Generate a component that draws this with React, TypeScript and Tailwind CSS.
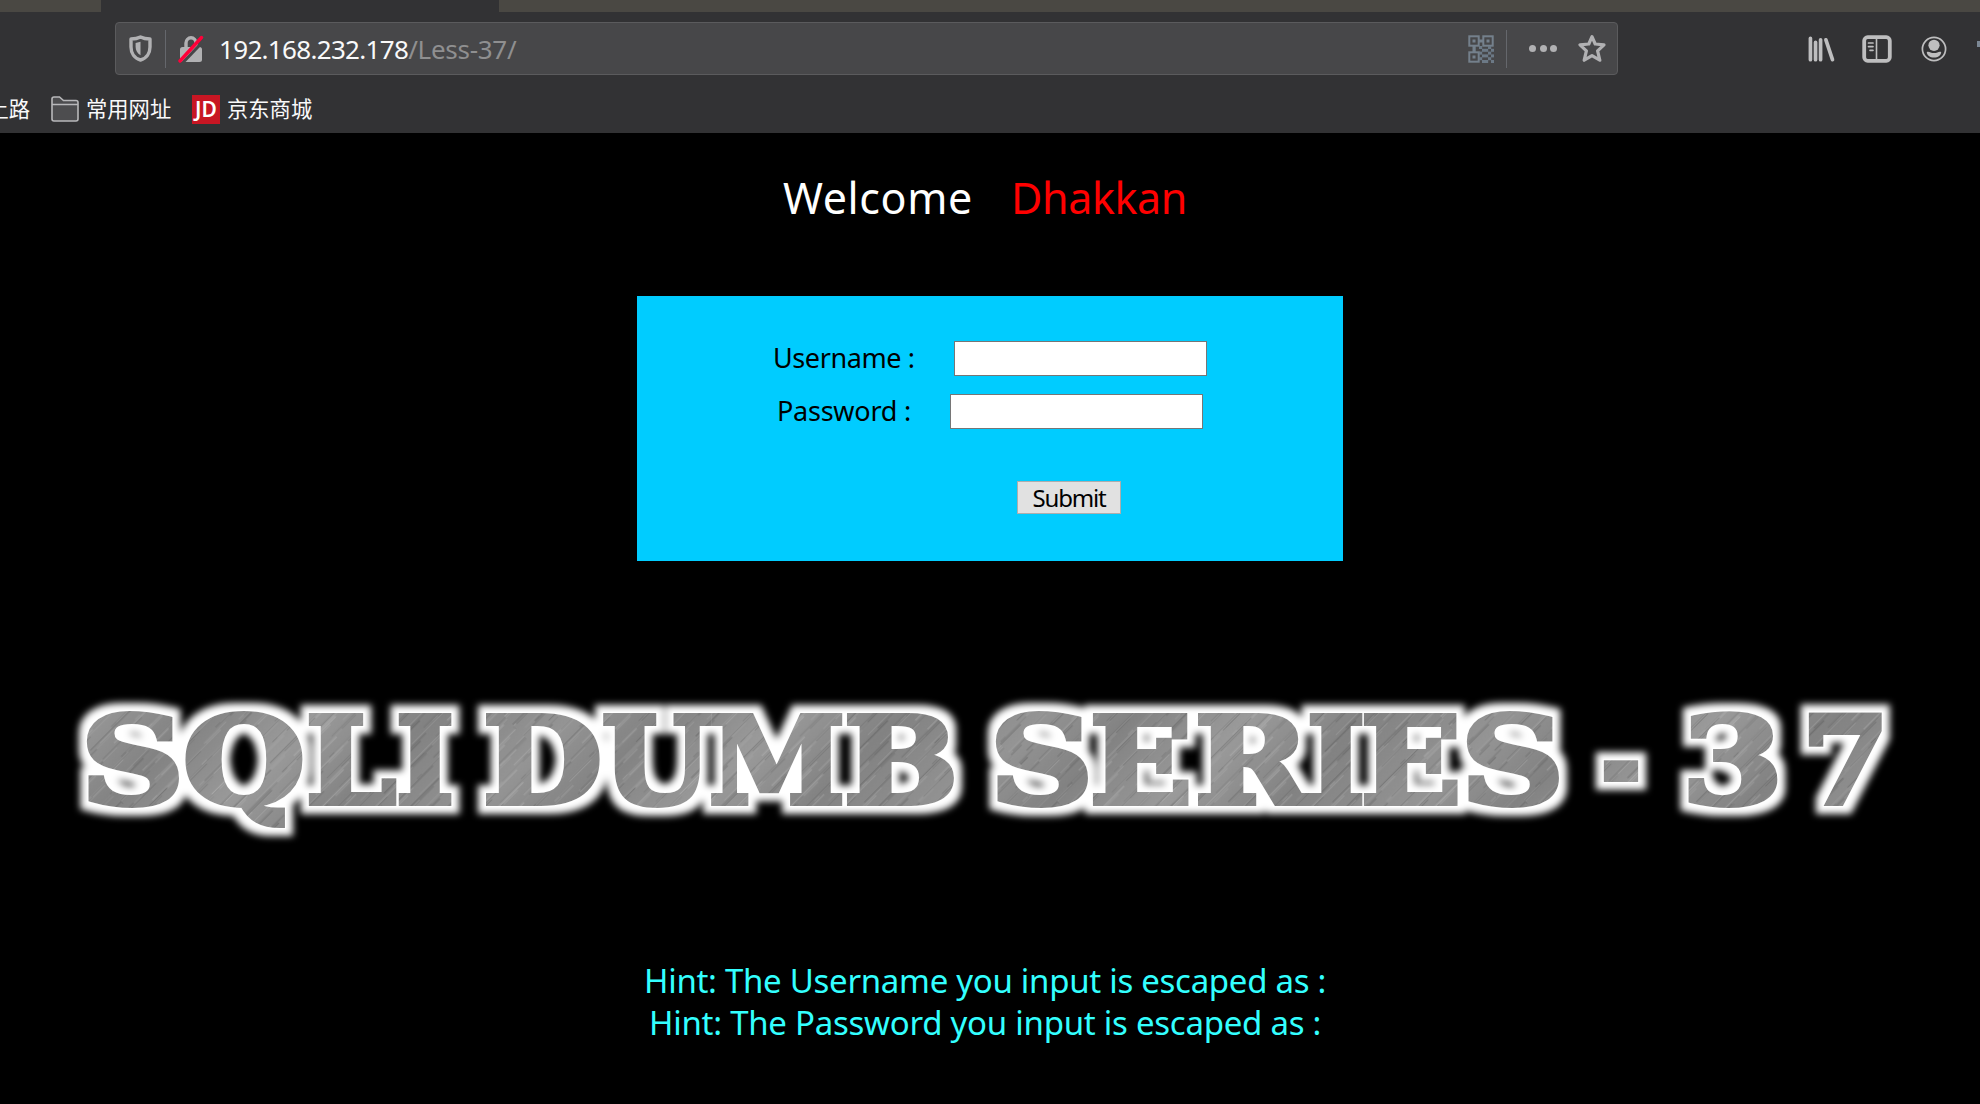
import React from "react";

const SANS = "font-['Noto_Sans','Noto_Sans_CJK_SC',sans-serif]";

function Shield() {
  return (
    <svg width="23" height="27" viewBox="0 0 23 27">
      <path d="M11.500 2 C8 3.800 5 4 2 4 V12 C2 18.500 5.500 23.500 11.500 25 C17.500 23.500 21 18.500 21 12 V4 C18 4 15 3.800 11.500 2Z" fill="none" stroke="#b1b1b3" strokeWidth="3.400" strokeLinejoin="round" />
      <path d="M11.500 6.800 V20.300 C8.500 18.600 6.600 15.500 6.600 12 V8Z" fill="#b1b1b3" />
    </svg>
  );
}

function BrokenLock() {
  return (
    <svg width="26" height="28" viewBox="0 0 26 28">
      <path d="M8 13 V8 a5 5.200 0 0 1 10 0 V13" fill="none" stroke="#b1b1b3" strokeWidth="3.400" />
      <rect x="2" y="12" width="22" height="15" rx="2.500" fill="#b1b1b3" />
      <path d="M4.500 28 L27 4.500" stroke="#474749" strokeWidth="3" />
      <path d="M2 26 L23.500 2.500" stroke="#ff0039" strokeWidth="3.400" strokeLinecap="round" />
    </svg>
  );
}

const CHECKER = ["010010", "001101", "110010", "001101", "010010", "101101"];

function QrCode() {
  return (
    <svg width="26" height="28" viewBox="0 0 26 28">
      <g fill="none" stroke="#74808c" strokeWidth="2">
        <rect x="1.300" y="1.300" width="9.400" height="9.400" />
        <rect x="15.300" y="1.300" width="9.400" height="9.400" />
        <rect x="1.300" y="17.300" width="9.400" height="9.400" />
      </g>
      <g fill="#74808c">
        <rect x="4.500" y="4.500" width="3" height="3" />
        <rect x="18.500" y="4.500" width="3" height="3" />
        <rect x="4.500" y="20.500" width="3" height="3" />
        <rect x="11" y="4.500" width="4" height="3" />
        <rect x="4.500" y="11" width="3.200" height="6" />
      </g>
      {CHECKER.flatMap((row, y) =>
        row.split("").map((c, x) =>
          c === "1" && !(x === 0 && y > 1) ? (
            <rect key={`${x}-${y}`} x={8 + x * 3} y={11 + y * 2.8} width="3.200" height="3" fill="#6c7986" />
          ) : null,
        ),
      )}
    </svg>
  );
}

function Star() {
  return (
    <svg width="28" height="29" viewBox="0 0 28 29">
      <path d="M14 2.600 L17.200 10 L26 10.800 L19.600 16.800 L21.800 26.200 L14 21.600 L6.200 26.200 L8.400 16.800 L2 10.800 L10.800 10Z" fill="none" stroke="#b1b1b3" strokeWidth="3.200" strokeLinejoin="round" />
    </svg>
  );
}

function Library() {
  return (
    <svg width="28" height="28" viewBox="0 0 28 28" stroke="#bebebf" strokeWidth="3.800" strokeLinecap="round">
      <path d="M2.500 3 V25 M7.800 7 V25 M13 4.500 V25 M18.500 4.500 L25.300 25" />
    </svg>
  );
}

function Sidebar() {
  return (
    <svg width="30" height="28" viewBox="0 0 30 28" fill="none" stroke="#bebebf">
      <rect x="2.200" y="2.200" width="25.600" height="23.600" rx="3.500" strokeWidth="3.800" />
      <path d="M14.500 3 V25" strokeWidth="1.600" />
      <path d="M6.500 8 H11 M6.500 11.600 H11 M8 15.300 H11" strokeWidth="1.700" strokeLinecap="round" />
    </svg>
  );
}

function Account() {
  return (
    <svg width="26" height="28" viewBox="0 0 26 28">
      <circle cx="13" cy="14" r="11.600" fill="none" stroke="#bebebf" strokeWidth="1.700" />
      <circle cx="13" cy="10.300" r="5.600" fill="#bebebf" />
      <path d="M5.800 17 C8 15.800 9.500 18 13 18 C16.500 18 18 15.800 20.200 17 C20.200 20.500 17 22.500 13 22.500 C9 22.500 5.800 20.500 5.800 17Z" fill="#bebebf" />
    </svg>
  );
}

function Folder() {
  return (
    <svg width="28" height="26" viewBox="0 0 28 26">
      <path d="M1 3 a2 2 0 0 1 2-2 h5.500 l4 3.500 H25 a2 2 0 0 1 2 2 V23 a2 2 0 0 1-2 2 H3 a2 2 0 0 1-2-2Z M1 8.500 H27" fill="#4d4d4f" stroke="#b8b8ba" strokeWidth="1.600" />
    </svg>
  );
}

function Browser() {
  return (
    <header className="h-[133px] overflow-hidden bg-[#323234]">
      <div className="flex h-[12px] justify-between">
        <div className="w-[101px] bg-[#4a4843]" />
        <div className="w-[1481px] bg-[#4a4843]" />
      </div>
      <div className="flex h-[73px] items-center pl-[115px]">
        <div className="flex h-[53px] w-[1503px] items-center rounded-[4px] border border-[#5b5b5d] bg-[#474749] pl-[13px] pr-[11px]">
          <Shield />
          <div className="ml-[13px] h-[38px] w-px bg-[#65676c]" />
          <div className="ml-[12px]"><BrokenLock /></div>
          <div className="ml-[15px] grow whitespace-pre text-[26px] leading-none tracking-[-0.280px] text-[#8f8f90]">
            <span className="tracking-[-0.680px] text-[#f9f9fa]">192.168.232.178</span>/Less-37/
          </div>
          <QrCode />
          <div className="ml-[12px] h-[38px] w-px bg-[#65676c]" />
          <div className="ml-[22px] flex gap-[3.500px]">
            <i className="size-[7px] rounded-full bg-[#b1b1b3]" />
            <i className="size-[7px] rounded-full bg-[#b1b1b3]" />
            <i className="size-[7px] rounded-full bg-[#b1b1b3]" />
          </div>
          <div className="ml-[21px]"><Star /></div>
        </div>
        <div className="ml-[190px] flex w-[172px] items-center overflow-hidden">
          <Library />
          <div className="ml-[27px]"><Sidebar /></div>
          <div className="ml-[29px]"><Account /></div>
          <div className="mb-[10px] ml-[30px] h-[6px] w-[3px] bg-[#7b8794]" />
        </div>
      </div>
      <div className="flex h-[48px] items-center text-[21.300px] leading-none text-[#f9f9fa]">
        <div className="flex w-[30px] justify-end whitespace-nowrap">上路</div>
        <div className="ml-[21px]"><Folder /></div>
        <span className="ml-[7px] w-[85px] whitespace-nowrap">常用网址</span>
        <div className="ml-[21px] flex h-[29px] w-[28px] items-center justify-center bg-[#c81623] text-[21px] font-semibold text-white">JD</div>
        <span className="ml-[7px] whitespace-nowrap">京东商城</span>
      </div>
    </header>
  );
}

type Glyph = [char: string, x: number, width: number];

const WORDS: Glyph[][] = [
  [["S", 81, 103], ["Q", 183, 122], ["L", 306, 90], ["I", 396, 58]],
  [["D", 483, 119], ["U", 602, 109], ["M", 709, 136], ["B", 844, 114]],
  [["S", 990, 103], ["E", 1090, 102], ["R", 1195, 114], ["I", 1307, 58], ["E", 1361, 100], ["S", 1461, 103]],
  [["-", 1601, 40]],
  [["3", 1682, 101], ["7", 1802, 87]],
];

function Banner() {
  return (
    <svg width="1980" height="170" viewBox="0 0 1980 170" className="block">
      <defs>
        <linearGradient id="steel">
          <stop offset="0" stopColor="#828282" />
          <stop offset="0.3" stopColor="#949494" />
          <stop offset="0.5" stopColor="#828282" />
          <stop offset="0.75" stopColor="#9a9a9a" />
          <stop offset="1" stopColor="#828282" />
        </linearGradient>
        <pattern id="brush" width="331" height="331" patternUnits="userSpaceOnUse" patternTransform="rotate(45)">
          <rect width="331" height="331" fill="url(#steel)" />
          {Array.from({ length: 600 }, (_, i) => (
            <rect
              key={i}
              x={(i * 204.57) % 331}
              y={((i * 83.7) % 371) - 50}
              width={0.7 + (i % 3) * 0.4}
              height={20 + ((i * 31) % 50)}
              fill={i % 2 ? "#fff" : "#000"}
              opacity={0.08 + (i % 5) * 0.02}
            />
          ))}
        </pattern>
        <filter id="glow" filterUnits="userSpaceOnUse" x="40" y="0" width="1900" height="170">
          <feMorphology in="SourceAlpha" operator="dilate" radius="8" />
          <feGaussianBlur stdDeviation="3.500" result="halo" />
          <feMorphology in="SourceAlpha" operator="dilate" radius="1" result="rim" />
          <feFlood floodColor="#fff" result="white" />
          <feComposite in="white" in2="halo" operator="in" result="whiteHalo" />
          <feComposite in="white" in2="rim" operator="in" result="whiteRim" />
          <feMerge>
            <feMergeNode in="whiteHalo" />
            <feMergeNode in="whiteRim" />
            <feMergeNode in="SourceGraphic" />
          </feMerge>
        </filter>
      </defs>
      <text y="123" fontSize="120" fontWeight="700" fontFamily="DejaVu Serif" fill="url(#brush)" stroke="url(#brush)" strokeWidth="6" filter="url(#glow)">
        {WORDS.map((word) =>
          word.map(([char, x, width]) => (
            <tspan key={x} x={x} textLength={width} lengthAdjust="spacingAndGlyphs">{char}</tspan>
          )),
        )}
      </text>
    </svg>
  );
}

export default function App() {
  return (
    <div className={`h-[1104px] w-[1980px] overflow-hidden bg-black ${SANS}`}>
      <Browser />
      <main className="flex flex-col items-start">
        <h1 className="mt-[35px] flex h-[60px] items-center pl-[783px] text-[43px] leading-[60px] text-white">
          <span className="w-[228px] tracking-[0.600px]">Welcome</span>
          <span className="tracking-[-0.400px] text-[#ff0000]">Dhakkan</span>
        </h1>
        <form className="ml-[637px] mt-[68px] h-[265px] w-[706px] bg-[#00ccff] pt-[45px] text-[27px] text-black" onSubmit={(e) => e.preventDefault()}>
          <label className="ml-[136px] flex h-[35px] items-center">
            <span className="w-[181px] pb-[2px] leading-[33px] tracking-[-0.400px]">Username :</span>
            <input className="h-[35px] w-[253px] border border-[#767676] bg-white" />
          </label>
          <label className="ml-[140px] mt-[18px] flex h-[35px] items-center">
            <span className="w-[173px] pb-[2px] leading-[33px] tracking-[-0.250px]">Password :</span>
            <input className="h-[35px] w-[253px] border border-[#767676] bg-white" />
          </label>
          <button className="ml-[380px] mt-[52px] flex h-[33px] w-[104px] items-center justify-center border border-[#adadad] bg-[#e1e1e1] text-[24px] leading-none tracking-[-1.200px]">Submit</button>
        </form>
        <div className="mt-[119px]"><Banner /></div>
        <div className="mt-[110px] text-[33px] leading-[42px] text-[#33ffff]">
          <p className="whitespace-nowrap pl-[644px] tracking-[-0.290px]">Hint: The Username you input is escaped as :</p>
          <p className="whitespace-nowrap pl-[649px] tracking-[-0.260px]">Hint: The Password you input is escaped as :</p>
        </div>
      </main>
    </div>
  );
}
